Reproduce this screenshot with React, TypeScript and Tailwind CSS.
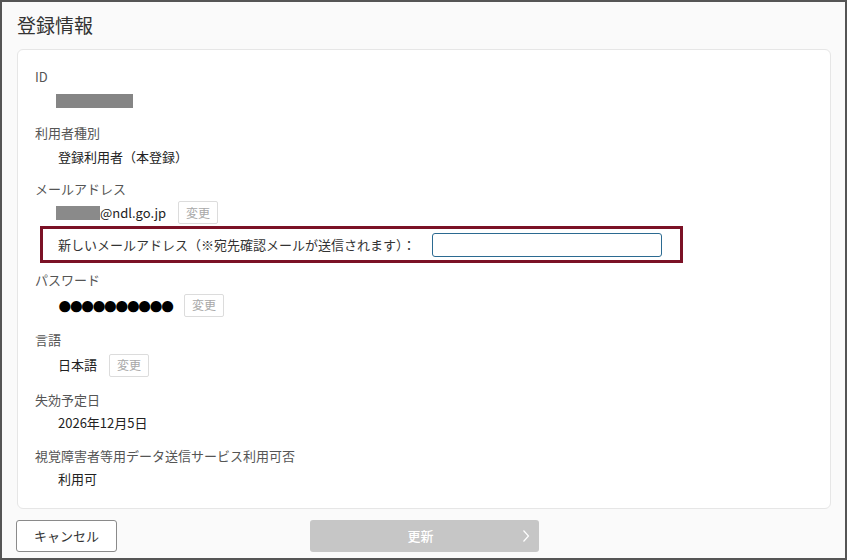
import React from 'react';

const font = { fontFamily: '"Noto Sans CJK JP", "Noto Sans", sans-serif' };

// 小さい「変更」ボタン
const ChangeButton: React.FC<{ className?: string }> = ({ className = '' }) => (
  <span
    className={`inline-flex h-[23px] w-[40px] items-center justify-center rounded-[2px] border border-[#dcdcdc] bg-white text-[12px] text-[#a8a8a8] ${className}`}
  >
    変更
  </span>
);

const Label: React.FC<{ children: React.ReactNode }> = ({ children }) => (
  <div className="h-[20px] text-[13px] leading-[20px] text-[#555]">{children}</div>
);

export default function App() {
  return (
    <div
      className="box-border h-[560px] w-[847px] border-2 border-[#555] bg-[#fafafa] pl-[15px] pt-[9px]"
      style={font}
    >
      <h1 className="h-[28px] text-[19px] leading-[28px] text-[#333]">登録情報</h1>

      <div className="mt-[10px] w-[814px] rounded-md border border-[#e6e6e6] bg-white pb-[16px] pl-[17px] pt-[17px]">
        {/* ID */}
        <div className="mb-[8px]">
          <Label>ID</Label>
          <div className="flex h-[28px] items-center pl-[21px]">
            <span className="h-[14px] w-[77px] bg-[#858585]" />
          </div>
        </div>

        {/* 利用者種別 */}
        <div className="mb-[8px]">
          <Label>利用者種別</Label>
          <div className="flex h-[28px] items-center pl-[23px] text-[13px] text-[#222]">
            登録利用者（本登録）
          </div>
        </div>

        {/* メールアドレス */}
        <div className="mb-[7px]">
          <Label>メールアドレス</Label>
          <div className="flex h-[27px] items-center pl-[21px] text-[13px] text-[#222]">
            <span className="h-[14px] w-[44px] bg-[#8a8a8a]" />
            <span>@ndl.go.jp</span>
            <ChangeButton className="ml-[12px]" />
          </div>
          <div className="ml-[5px] flex h-[37px] w-[643px] items-center border-[3px] border-[#7b1126] pl-[15px]">
            <span className="w-[374px] text-[13px] text-[#333]">
              新しいメールアドレス（※宛先確認メールが送信されます）：
            </span>
            <input
              type="text"
              className="h-[24px] w-[230px] rounded-[3px] border-[1.5px] border-[#2b6a91] bg-white outline-none"
            />
          </div>
        </div>

        {/* パスワード */}
        <div className="mb-[10px]">
          <Label>パスワード</Label>
          <div className="flex h-[30px] items-center pl-[22px]">
            <span
              className="text-[26px] leading-none tracking-[-4.3px] text-black"
              style={{ fontFamily: '"Liberation Sans", sans-serif' }}
            >
              ●●●●●●●●●●
            </span>
            <ChangeButton className="ml-[13px]" />
          </div>
        </div>

        {/* 言語 */}
        <div className="mb-[10px]">
          <Label>言語</Label>
          <div className="flex h-[30px] items-center pl-[23px] text-[13px] text-[#222]">
            日本語
            <ChangeButton className="ml-[12px]" />
          </div>
        </div>

        {/* 失効予定日 */}
        <div className="mb-[10px]">
          <Label>失効予定日</Label>
          <div className="flex h-[26px] items-center pl-[23px] text-[13px] text-[#222]">
            2026年12月5日
          </div>
        </div>

        {/* 視覚障害者等用データ送信サービス利用可否 */}
        <div>
          <Label>視覚障害者等用データ送信サービス利用可否</Label>
          <div className="flex h-[26px] items-center pl-[23px] text-[13px] text-[#222]">
            利用可
          </div>
        </div>
      </div>

      <div className="mt-[11px] flex items-center">
        <button className="-ml-[1px] h-[32px] w-[101px] rounded-[3px] border border-[#8a8a8a] bg-white text-[13px] text-[#333]">
          キャンセル
        </button>
        <button className="relative ml-[193px] h-[32px] w-[229px] rounded-[3px] bg-[#c6c6c6] pr-[8px] text-[13px] font-medium text-white">
          更新
          <span className="absolute right-[9px] top-1/2 -translate-y-1/2">
            <svg width="8" height="14" viewBox="0 0 8 14" fill="none">
              <path d="M1.5 1.5L6.5 7L1.5 12.5" stroke="white" strokeWidth="1.2" />
            </svg>
          </span>
        </button>
      </div>
    </div>
  );
}
